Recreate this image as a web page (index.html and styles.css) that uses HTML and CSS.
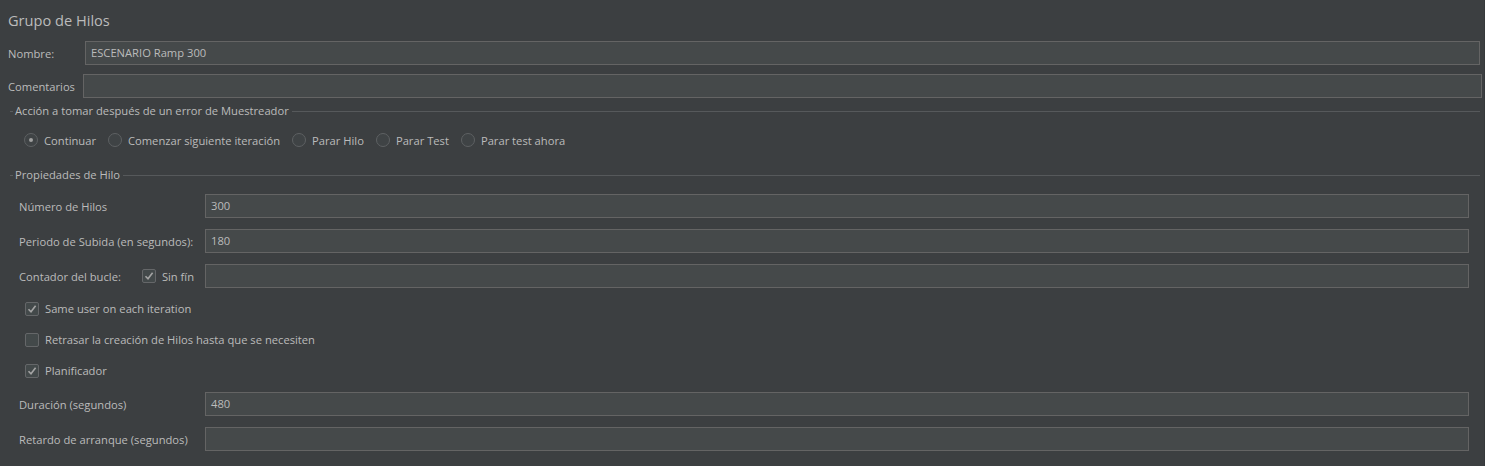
FILE: index.html
```html
<!DOCTYPE html>
<html lang="es">
<head>
<meta charset="utf-8">
<title>Grupo de Hilos</title>
<link rel="stylesheet" href="styles.css">
</head>
<body>
<div class="page">
  <h1 class="title">Grupo de Hilos</h1>
  <div class="row row-name">
    <span class="lbl">Nombre:</span>
    <div class="input">ESCENARIO Ramp 300</div>
  </div>
  <div class="row row-comment">
    <span class="lbl">Comentarios</span>
    <div class="input"></div>
  </div>

  <section class="group group-action">
    <div class="legend"><span class="dash"></span><span class="legend-text">Acción a tomar después de un error de Muestreador</span><span class="line"></span></div>
    <div class="radios">
      <span class="radio checked"><span class="circle"></span>Continuar</span>
      <span class="radio"><span class="circle"></span>Comenzar siguiente iteración</span>
      <span class="radio"><span class="circle"></span>Parar Hilo</span>
      <span class="radio"><span class="circle"></span>Parar Test</span>
      <span class="radio"><span class="circle"></span>Parar test ahora</span>
    </div>
  </section>

  <section class="group group-props">
    <div class="legend"><span class="dash"></span><span class="legend-text">Propiedades de Hilo</span><span class="line"></span></div>
    <div class="fields">
      <div class="field">
        <span class="flbl">Número de Hilos</span>
        <div class="input">300</div>
      </div>
      <div class="field">
        <span class="flbl">Periodo de Subida (en segundos):</span>
        <div class="input">180</div>
      </div>
      <div class="field">
        <span class="flbl loop"><span>Contador del bucle:</span><span class="check-inline"><span class="box checked"><svg viewBox="0 0 14 14" width="14" height="14"><path d="M3.5 7.2 L6 9.8 L10.6 3.8" fill="none" stroke="#a4a4a4" stroke-width="1.6"/></svg></span>Sin fín</span></span>
        <div class="input"></div>
      </div>
    </div>
    <div class="checks">
      <div class="check"><span class="box checked"><svg viewBox="0 0 14 14" width="14" height="14"><path d="M3.5 7.2 L6 9.8 L10.6 3.8" fill="none" stroke="#a4a4a4" stroke-width="1.6"/></svg></span>Same user on each iteration</div>
      <div class="check"><span class="box"></span>Retrasar la creación de Hilos hasta que se necesiten</div>
      <div class="check"><span class="box checked"><svg viewBox="0 0 14 14" width="14" height="14"><path d="M3.5 7.2 L6 9.8 L10.6 3.8" fill="none" stroke="#a4a4a4" stroke-width="1.6"/></svg></span>Planificador</div>
    </div>
    <div class="fields fields-sched">
      <div class="field">
        <span class="flbl">Duración (segundos)</span>
        <div class="input">480</div>
      </div>
      <div class="field">
        <span class="flbl">Retardo de arranque (segundos)</span>
        <div class="input"></div>
      </div>
    </div>
  </section>
</div>
</body>
</html>
```

FILE: styles.css
```css
html, body {
  margin: 0;
  padding: 0;
  background: #3c3f41;
}
body {
  font-family: "Open Sans", "Noto Sans", sans-serif;
  font-size: 11.2px;
  color: #bbbbbb;
}
.page {
  width: 1484px;
  height: 466px;
  border-right: 1px solid #36393b;
  box-sizing: content-box;
}
.title {
  margin: 0;
  padding: 10px 0 0 8px;
  height: 20px;
  line-height: 20px;
  font-size: 14.6px;
  font-weight: 400;
  color: #bbbbbb;
}
.row {
  display: flex;
  align-items: center;
  height: 24px;
}
.row-name {
  margin-top: 11px;
  padding-right: 4px;
}
.row-comment {
  margin-top: 9px;
  padding-right: 2px;
}
.lbl {
  padding-left: 8px;
  box-sizing: border-box;
}
.row-name .lbl { width: 85px; }
.row-comment .lbl { width: 83px; }
.input {
  flex: 1;
  height: 24px;
  box-sizing: border-box;
  border: 1px solid #646464;
  background: #45494a;
  padding-left: 5px;
  line-height: 22px;
  color: #bbbbbb;
}
.legend {
  display: flex;
  align-items: center;
  height: 16px;
  padding-right: 4px;
}
.dash {
  width: 3px;
  height: 1px;
  margin-left: 10px;
  background: #5a5d5f;
}
.legend-text {
  padding: 0 3px 0 2px;
  line-height: 16px;
}
.line {
  flex: 1;
  height: 1px;
  background: #56595b;
}
.group-action { margin-top: 5px; }
.radios {
  display: flex;
  align-items: center;
  height: 20px;
  margin-top: 11px;
  padding-left: 24px;
}
.radio {
  display: flex;
  align-items: center;
  margin-right: 12px;
}
.circle {
  width: 14px;
  height: 14px;
  box-sizing: border-box;
  border: 1px solid #5e6163;
  border-radius: 50%;
  background: #3f4345;
  margin-right: 6px;
  display: flex;
  align-items: center;
  justify-content: center;
}
.radio.checked .circle::after {
  content: "";
  width: 4px;
  height: 4px;
  border-radius: 50%;
  background: #a0a0a0;
}
.group-props { margin-top: 17px; }
.fields {
  display: flex;
  flex-direction: column;
  gap: 11px;
  margin-top: 11px;
  padding-right: 15px;
}
.field {
  display: flex;
  align-items: center;
  height: 24px;
}
.flbl {
  width: 205px;
  padding-left: 19px;
  box-sizing: border-box;
  flex: none;
}
.flbl.loop {
  display: flex;
  align-items: center;
}
.check-inline {
  display: flex;
  align-items: center;
  margin-left: 21px;
}
.box {
  width: 14px;
  height: 14px;
  box-sizing: border-box;
  border: 1px solid #656769;
  border-radius: 2px;
  background: #43494a;
  margin-right: 6px;
  display: flex;
  align-items: center;
  justify-content: center;
  flex: none;
}
.box svg {
  display: block;
  margin: -1px;
}
.checks {
  margin-top: 5px;
}
.check {
  display: flex;
  align-items: center;
  height: 31px;
  padding-left: 25px;
}
.fields-sched {
  margin-top: 6px;
}
```
